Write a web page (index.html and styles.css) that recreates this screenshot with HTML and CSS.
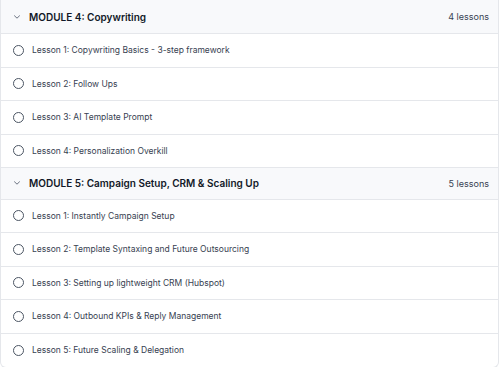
FILE: index.html
```html
<!DOCTYPE html>
<html lang="en">
<head>
  <meta charset="UTF-8" />
  <meta name="viewport" content="width=device-width, initial-scale=1" />
  <title>Course Curriculum</title>
  <link rel="stylesheet" href="styles.css">
</head>
<body>
  <div class="curriculum">
    <!-- Module 4 -->
    <div class="module">
      <div class="module-header">
        <div class="module-title">
          <svg class="chevron" width="8" height="8" viewBox="0 0 8 8"><path d="M1.5 2.8 L4 5.2 L6.5 2.8" fill="none" stroke="#6b7280" stroke-width="1" stroke-linecap="round" stroke-linejoin="round"/></svg>
          <span>MODULE 4: Copywriting</span>
        </div>
        <span class="lesson-count">4 lessons</span>
      </div>
      <ul class="lessons">
        <li class="lesson"><span class="circle"></span>Lesson 1: Copywriting Basics - 3-step framework</li>
        <li class="lesson"><span class="circle"></span>Lesson 2: Follow Ups</li>
        <li class="lesson"><span class="circle"></span>Lesson 3: AI Template Prompt</li>
        <li class="lesson"><span class="circle"></span>Lesson 4: Personalization Overkill</li>
      </ul>
    </div>

    <!-- Module 5 -->
    <div class="module">
      <div class="module-header">
        <div class="module-title">
          <svg class="chevron" width="8" height="8" viewBox="0 0 8 8"><path d="M1.5 2.8 L4 5.2 L6.5 2.8" fill="none" stroke="#6b7280" stroke-width="1" stroke-linecap="round" stroke-linejoin="round"/></svg>
          <span>MODULE 5: Campaign Setup, CRM &amp; Scaling Up</span>
        </div>
        <span class="lesson-count">5 lessons</span>
      </div>
      <ul class="lessons">
        <li class="lesson"><span class="circle"></span>Lesson 1: Instantly Campaign Setup</li>
        <li class="lesson"><span class="circle"></span>Lesson 2: Template Syntaxing and Future Outsourcing</li>
        <li class="lesson"><span class="circle"></span>Lesson 3: Setting up lightweight CRM (Hubspot)</li>
        <li class="lesson"><span class="circle"></span>Lesson 4: Outbound KPIs &amp; Reply Management</li>
        <li class="lesson"><span class="circle"></span>Lesson 5: Future Scaling &amp; Delegation</li>
      </ul>
    </div>
  </div>
</body>
</html>
```

FILE: styles.css
```css
body {
  margin: 0;
  font-family: 'Inter', sans-serif;
  background: #fff;
  color: #374151;
}

.curriculum {
  width: 499px;
  border: 1px solid #e5e7eb;
  border-top: none;
  border-radius: 0 0 6px 6px;
  overflow: hidden;
  box-sizing: border-box;
}

.module-header {
  display: flex;
  align-items: center;
  justify-content: space-between;
  height: 34px;
  padding: 0 9px 0 12px;
  background: #f8f9fb;
  border-bottom: 1px solid #e5e7eb;
  box-sizing: border-box;
}

.module + .module .module-header {
  height: 31.5px;
}

.module-title {
  display: flex;
  align-items: center;
  gap: 8px;
  font-size: 10px;
  font-weight: 600;
  color: #111827;
}

.chevron {
  display: block;
}

.lesson-count {
  font-size: 9px;
  color: #374151;
}

.lessons {
  list-style: none;
  margin: 0;
  padding: 0;
}

.lesson {
  display: flex;
  align-items: center;
  gap: 8px;
  height: 33.5px;
  padding: 0 12px;
  font-size: 8.5px;
  color: #374151;
  border-bottom: 1px solid #e5e7eb;
  box-sizing: border-box;
}

.module:last-child .lesson:last-child {
  border-bottom: none;
}

.circle {
  width: 11px;
  height: 11px;
  border: 1px solid #4b5563;
  border-radius: 50%;
  box-sizing: border-box;
}
```
